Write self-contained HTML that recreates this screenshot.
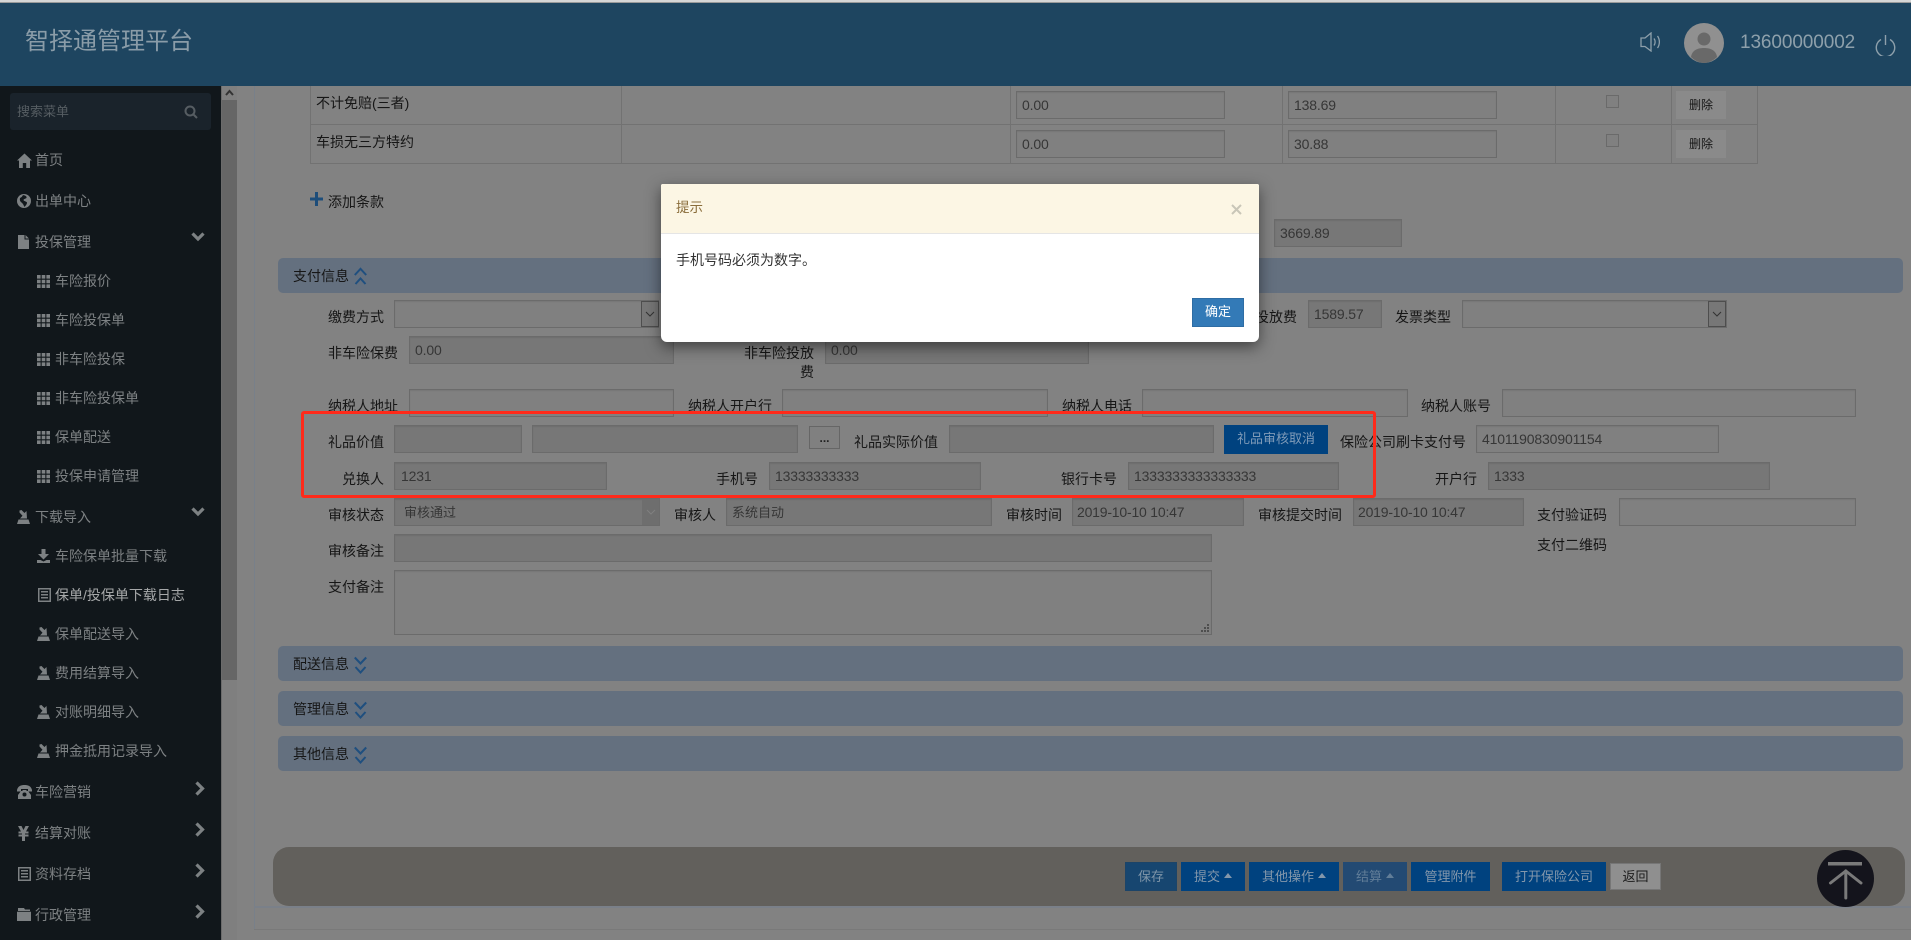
<!DOCTYPE html>
<html lang="zh-CN">
<head>
<meta charset="utf-8">
<title>智择通管理平台</title>
<style>
*{box-sizing:border-box}
html,body{margin:0;padding:0;width:1911px;height:940px;overflow:hidden;background:#828282;font-family:"Liberation Sans","Noto Sans CJK SC",sans-serif;font-size:14px;color:#1a1a1a}
div,span,svg{position:absolute}
.top{left:0;top:0;width:1911px;height:3px;background:#d6d6d6;border-bottom:1px solid #9a9a9a}
.hd{left:0;top:3px;width:1911px;height:83px;background:#1e4560}
.logo{left:25px;top:26px;font-size:24px;line-height:32px;color:#8a9ca8;white-space:nowrap}
.user{left:1740px;top:30px;font-size:19px;line-height:26px;letter-spacing:-.1px;color:#8ea0ab;white-space:nowrap}
.sb{left:0;top:86px;width:221px;height:854px;background:#11171b}
.sr{left:10px;top:93px;width:201px;height:37px;background:#1a232b;border-radius:3px}
.st{left:17px;top:102px;font-size:13px;line-height:20px;color:#565d62;white-space:nowrap}
.m{white-space:nowrap;line-height:20px;color:#7d8183;font-size:14px}
.m0{left:35px}
.m1{left:55px}
.scr{left:221px;top:86px;width:16px;height:854px;background:#7f7f7f;border-left:1px solid #6b6b6b}
.thumb{left:222px;top:100px;width:15px;height:580px;background:#666}
.v{background:#727272}
.h{background:#727272;height:1px}
.l{white-space:nowrap;line-height:20px;color:#161616;font-size:14px}
.i{height:28px;line-height:27px;border:1px solid #6b6b6b;background:#808080;padding-left:5px;color:#363636;font-size:14px;letter-spacing:-.15px;white-space:nowrap;box-shadow:inset 0 1px 1px rgba(0,0,0,.08)}
.r{background:#777}
.z{font-size:13px;letter-spacing:0;padding-left:9px}
.bar{left:278px;width:1625px;height:35px;background:#64707f;border-radius:5px}
.bt{left:293px;line-height:20px;white-space:nowrap;color:#161616;font-size:14px}
.b{height:29px;top:862px;background:#00427f;color:#8397ab;font-size:13px;line-height:29px;white-space:nowrap}
.b span{top:0;line-height:29px}
.ca{width:0;height:0;border-left:4px solid transparent;border-right:4px solid transparent;border-bottom:5px solid #8397ab;top:873px}
.arr{width:18px;height:26px;border:1px solid #4e4e4e;background:#777}
.del{left:1676px;width:50px;height:28px;background:#8a8a8a;color:#161616;font-size:12px;line-height:28px;text-align:center}
.cb{left:1606px;width:13px;height:13px;border:1px solid #6a6a6a;background:#808080}
.shade{left:661px;top:184px;width:598px;height:158px;background:#fff;border-radius:2px 2px 6px 6px;box-shadow:0 5px 15px rgba(0,0,0,.5)}
.red{left:301px;top:411px;width:1075px;height:87px;border:3px solid #ff2a1a;border-radius:3px}
</style>
</head>
<body>
<svg width="0" height="0" style="left:0;top:0">
<symbol id="home" viewBox="0 0 15 15"><path d="M7.5 0.5 L15 7.5 L13 7.5 L13 15 L9.2 15 L9.2 10 L5.8 10 L5.8 15 L2 15 L2 7.5 L0 7.5 Z" fill="#7d8183"/></symbol>
<symbol id="globe" viewBox="0 0 14 14"><circle cx="7" cy="7" r="7" fill="#7d8183"/><path d="M6 1 C8 1.5 10 2 9.5 4 C8.5 5 7 4.5 6.5 6 C7 7.5 9 7 10 8.5 C10 10.5 8.5 11.5 7.5 13 C6.5 11 6 9.5 4.5 8.5 C3 7.5 2.5 6 3 4 C4 3.5 5 3 6 1 Z" fill="#11171b"/></symbol>
<symbol id="file" viewBox="0 0 11 14"><path d="M0 0 H6.5 V4.5 H11 V14 H0 Z M7.5 0 L11 3.5 H7.5 Z" fill="#7d8183"/></symbol>
<symbol id="th" viewBox="0 0 13 13"><path d="M0 0h3.6v3.6H0zM4.7 0h3.6v3.6H4.7zM9.4 0H13v3.6H9.4zM0 4.7h3.6v3.6H0zM4.7 4.7h3.6v3.6H4.7zM9.4 4.7H13v3.6H9.4zM0 9.4h3.6V13H0zM4.7 9.4h3.6V13H4.7zM9.4 9.4H13V13H9.4z" fill="#7d8183"/></symbol>
<symbol id="imp" viewBox="0 0 13 14"><path d="M2.5 0.5 L4.5 0 L7.5 3 L9.5 1 L10 8.5 L3 8.5 L5.5 5.8 L2.5 2.5 Z M1.5 9.5 H11.5 L13 14 H0 Z" fill="#7d8183"/></symbol>
<symbol id="dl" viewBox="0 0 13 14"><path d="M4.5 0 H8.5 V5 H12 L6.5 10.5 L1 5 H4.5 Z M0 11 H3.5 L6.5 12.5 L9.5 11 H13 V14 H0 Z" fill="#7d8183"/></symbol>
<symbol id="list" viewBox="0 0 13 14"><path fill-rule="evenodd" d="M0 0 H13 V14 H0 Z M1.5 1.5 V12.5 H11.5 V1.5 Z M3 3 H10 V4.5 H3 Z M3 6 H10 V7.5 H3 Z M3 9 H10 V10.5 H3 Z" fill="#7d8183"/></symbol>
<symbol id="tel" viewBox="0 0 15 14"><path d="M0 5 C1 1 4 0 7.5 0 C11 0 14 1 15 5 V6.5 H11 V4 H4 V6.5 H0 Z M4 6 H5.5 V5 H9.5 V6 H11 L14 10 V14 H1 V10 Z" fill="#7d8183"/><circle cx="7.5" cy="9.5" r="2" fill="#11171b"/></symbol>
<symbol id="yen" viewBox="0 0 11 15"><path d="M0 0 H3.5 L5.5 4 L7.5 0 H11 L8 5.5 H10.5 V7.5 H7 V8.5 H10.5 V10.5 H7 V15 H4 V10.5 H.5 V8.5 H4 V7.5 H.5 V5.5 H3 Z" fill="#7d8183"/></symbol>
<symbol id="fold" viewBox="0 0 14 13"><path d="M1 0 H7 L8 1.5 H13 V3 H1 Z M0 3.8 H14 V13 H0 Z" fill="#7d8183"/></symbol>
</svg>

<div class="top"></div>
<div class="hd"></div>
<div class="logo">智择通管理平台</div>
<svg style="left:1640px;top:32px" width="23" height="20" viewBox="0 0 23 20" fill="none" stroke="#8ea0ab" stroke-width="1.3"><path d="M1 6 H5 L11 1 V19 L5 14.5 H1 Z"/><path d="M14 6.5 C15.5 8.5 15.5 11.5 14 13.5"/><path d="M17.5 4 C20 7.5 20 12.5 17.5 16"/></svg>
<svg style="left:1684px;top:23px" width="40" height="40" viewBox="0 0 40 40"><circle cx="20" cy="20" r="20" fill="#909090"/><circle cx="20" cy="16" r="6.5" fill="#696969"/><path d="M7 34 C8 27 14 25 20 25 C26 25 32 27 33 34 C29 38 24 40 20 40 C16 40 11 38 7 34 Z" fill="#696969"/></svg>
<div class="user">13600000002</div>
<svg style="left:1875px;top:34px" width="21" height="22" viewBox="0 0 21 22" fill="none" stroke="#8ea0ab" stroke-width="1.4"><path d="M6 5.5 A9.2 9.2 0 1 0 15 5.5"/><path d="M10.5 1 V11"/></svg>

<!-- sidebar -->
<div class="sb"></div>
<div class="sr"></div>
<div class="st">搜索菜单</div>
<svg style="left:184px;top:105px" width="14" height="14" viewBox="0 0 14 14" fill="none" stroke="#565d62" stroke-width="2"><circle cx="6" cy="6" r="4.5"/><path d="M9.5 9.5 L13 13"/></svg>

<svg style="left:17px;top:153px" width="15" height="15"><use href="#home"/></svg><div class="m m0" style="top:150px">首页</div>
<svg style="left:17px;top:194px" width="14" height="14"><use href="#globe"/></svg><div class="m m0" style="top:191px">出单中心</div>
<svg style="left:18px;top:235px" width="11" height="14"><use href="#file"/></svg><div class="m m0" style="top:232px">投保管理</div>
<svg style="left:191px;top:232px" width="14" height="10" viewBox="0 0 14 10" fill="none" stroke="#7d8183" stroke-width="3.2"><path d="M1.5 1.5 L7 7 L12.5 1.5"/></svg>

<svg style="left:37px;top:275px" width="13" height="13"><use href="#th"/></svg><div class="m m1" style="top:271px">车险报价</div>
<svg style="left:37px;top:314px" width="13" height="13"><use href="#th"/></svg><div class="m m1" style="top:310px">车险投保单</div>
<svg style="left:37px;top:353px" width="13" height="13"><use href="#th"/></svg><div class="m m1" style="top:349px">非车险投保</div>
<svg style="left:37px;top:392px" width="13" height="13"><use href="#th"/></svg><div class="m m1" style="top:388px">非车险投保单</div>
<svg style="left:37px;top:431px" width="13" height="13"><use href="#th"/></svg><div class="m m1" style="top:427px">保单配送</div>
<svg style="left:37px;top:470px" width="13" height="13"><use href="#th"/></svg><div class="m m1" style="top:466px">投保申请管理</div>

<svg style="left:17px;top:510px" width="13" height="14"><use href="#imp"/></svg><div class="m m0" style="top:507px">下载导入</div>
<svg style="left:191px;top:507px" width="14" height="10" viewBox="0 0 14 10" fill="none" stroke="#7d8183" stroke-width="3.2"><path d="M1.5 1.5 L7 7 L12.5 1.5"/></svg>

<svg style="left:37px;top:549px" width="13" height="14"><use href="#dl"/></svg><div class="m m1" style="top:546px">车险保单批量下载</div>
<svg style="left:38px;top:588px" width="13" height="14"><use href="#list"/></svg><div class="m m1" style="top:585px;color:#a6a8a9">保单/投保单下载日志</div>
<svg style="left:37px;top:627px" width="13" height="14"><use href="#imp"/></svg><div class="m m1" style="top:624px">保单配送导入</div>
<svg style="left:37px;top:666px" width="13" height="14"><use href="#imp"/></svg><div class="m m1" style="top:663px">费用结算导入</div>
<svg style="left:37px;top:705px" width="13" height="14"><use href="#imp"/></svg><div class="m m1" style="top:702px">对账明细导入</div>
<svg style="left:37px;top:744px" width="13" height="14"><use href="#imp"/></svg><div class="m m1" style="top:741px">押金抵用记录导入</div>

<svg style="left:17px;top:785px" width="15" height="14"><use href="#tel"/></svg><div class="m m0" style="top:782px">车险营销</div>
<svg style="left:195px;top:781px" width="10" height="15" viewBox="0 0 10 15" fill="none" stroke="#7d8183" stroke-width="3.2"><path d="M1.5 1.5 L7.5 7.5 L1.5 13.5"/></svg>
<svg style="left:18px;top:826px" width="11" height="15"><use href="#yen"/></svg><div class="m m0" style="top:823px">结算对账</div>
<svg style="left:195px;top:822px" width="10" height="15" viewBox="0 0 10 15" fill="none" stroke="#7d8183" stroke-width="3.2"><path d="M1.5 1.5 L7.5 7.5 L1.5 13.5"/></svg>
<svg style="left:18px;top:867px" width="13" height="14"><use href="#list"/></svg><div class="m m0" style="top:864px">资料存档</div>
<svg style="left:195px;top:863px" width="10" height="15" viewBox="0 0 10 15" fill="none" stroke="#7d8183" stroke-width="3.2"><path d="M1.5 1.5 L7.5 7.5 L1.5 13.5"/></svg>
<svg style="left:17px;top:908px" width="14" height="13"><use href="#fold"/></svg><div class="m m0" style="top:905px">行政管理</div>
<svg style="left:195px;top:904px" width="10" height="15" viewBox="0 0 10 15" fill="none" stroke="#7d8183" stroke-width="3.2"><path d="M1.5 1.5 L7.5 7.5 L1.5 13.5"/></svg>

<!-- scrollbar -->
<div class="scr"></div>
<div class="thumb"></div>
<svg style="left:225px;top:89px" width="9" height="7" viewBox="0 0 9 7" fill="none" stroke="#333" stroke-width="2"><path d="M1 6 L4.5 2 L8 6"/></svg>

<!-- panel lines -->
<div style="left:254px;top:86px;width:1px;height:843px;background:#78808a"></div>
<div style="left:254px;top:906px;width:1657px;height:2px;background:#7a8089"></div>
<div style="left:254px;top:929px;width:1657px;height:1px;background:#797979"></div>

<!-- table -->
<div class="v" style="left:310px;top:86px;width:1px;height:78px"></div>
<div class="v" style="left:621px;top:86px;width:1px;height:78px"></div>
<div class="v" style="left:1010px;top:86px;width:1px;height:78px"></div>
<div class="v" style="left:1282px;top:86px;width:1px;height:78px"></div>
<div class="v" style="left:1555px;top:86px;width:1px;height:78px"></div>
<div class="v" style="left:1671px;top:86px;width:1px;height:78px"></div>
<div class="v" style="left:1757px;top:86px;width:1px;height:78px"></div>
<div class="h" style="left:310px;top:124px;width:1448px"></div>
<div class="h" style="left:310px;top:163px;width:1448px"></div>
<div class="l" style="left:316px;top:93px">不计免赔(三者)</div>
<div class="l" style="left:316px;top:132px">车损无三方特约</div>
<div class="i" style="left:1016px;top:91px;width:209px">0.00</div>
<div class="i" style="left:1016px;top:130px;width:209px">0.00</div>
<div class="i" style="left:1288px;top:91px;width:209px">138.69</div>
<div class="i" style="left:1288px;top:130px;width:209px">30.88</div>
<div class="cb" style="top:95px"></div>
<div class="cb" style="top:134px"></div>
<div class="del" style="top:91px">删除</div>
<div class="del" style="top:130px">删除</div>

<svg style="left:310px;top:192px" width="13" height="14" viewBox="0 0 13 14"><path d="M5 0 H8 V5.5 H13 V8.5 H8 V14 H5 V8.5 H0 V5.5 H5 Z" fill="#1d4d7a"/></svg>
<div class="l" style="left:328px;top:192px">添加条款</div>
<div class="i r" style="left:1274px;top:219px;width:128px">3669.89</div>

<!-- bar: payment -->
<div class="bar" style="top:258px"></div>
<div class="bt" style="top:266px">支付信息</div>
<svg style="left:354px;top:267px" width="13" height="18" viewBox="0 0 13 18" fill="none" stroke="#1f4f7f" stroke-width="2"><path d="M.8 8 L6.5 1.8 L12.2 8"/><path d="M1.5 17 L6.5 11.5 L11.5 17"/></svg>

<!-- row 1 -->
<div class="l" style="left:328px;top:307px">缴费方式</div>
<div class="i" style="left:394px;top:300px;width:265px"></div>
<div class="arr" style="left:641px;top:301px"></div>
<svg style="left:645px;top:311px" width="10" height="6" viewBox="0 0 10 6" fill="none" stroke="#333" stroke-width="1"><path d="M1 1 L5 5 L9 1"/></svg>
<div class="l" style="left:1255px;top:307px">投放费</div>
<div class="i r" style="left:1308px;top:300px;width:74px">1589.57</div>
<div class="l" style="left:1395px;top:307px">发票类型</div>
<div class="i" style="left:1462px;top:300px;width:265px"></div>
<div class="arr" style="left:1708px;top:301px"></div>
<svg style="left:1712px;top:311px" width="10" height="6" viewBox="0 0 10 6" fill="none" stroke="#333" stroke-width="1"><path d="M1 1 L5 5 L9 1"/></svg>

<!-- row 2 -->
<div class="l" style="left:328px;top:343px">非车险保费</div>
<div class="i r" style="left:409px;top:336px;width:265px">0.00</div>
<div class="l" style="left:744px;top:343px">非车险投放</div>
<div class="l" style="left:800px;top:362px">费</div>
<div class="i r" style="left:825px;top:336px;width:264px">0.00</div>

<!-- row 3 -->
<div class="l" style="left:328px;top:396px">纳税人地址</div>
<div class="i" style="left:409px;top:389px;width:265px"></div>
<div class="l" style="left:688px;top:396px">纳税人开户行</div>
<div class="i" style="left:782px;top:389px;width:266px"></div>
<div class="l" style="left:1062px;top:396px">纳税人电话</div>
<div class="i" style="left:1142px;top:389px;width:266px"></div>
<div class="l" style="left:1421px;top:396px">纳税人账号</div>
<div class="i" style="left:1502px;top:389px;width:354px"></div>

<!-- row 4 -->
<div class="l" style="left:328px;top:432px">礼品价值</div>
<div class="i r" style="left:394px;top:425px;width:128px"></div>
<div class="i r" style="left:532px;top:425px;width:266px"></div>
<div style="left:809px;top:426px;width:31px;height:23px;border:1px solid #666;background:#808080;color:#222;font-size:12px;line-height:22px;text-align:center;font-weight:bold">...</div>
<div class="l" style="left:854px;top:432px">礼品实际价值</div>
<div class="i r" style="left:949px;top:425px;width:265px"></div>
<div style="left:1224px;top:425px;width:104px;height:29px;background:#00427f;color:#7f9bb8;font-size:13px;line-height:27px;text-align:center;white-space:nowrap">礼品审核取消</div>
<div class="l" style="left:1340px;top:432px">保险公司刷卡支付号</div>
<div class="i" style="left:1476px;top:425px;width:243px">4101190830901154</div>

<!-- row 5 -->
<div class="l" style="left:342px;top:469px">兑换人</div>
<div class="i r" style="left:394px;top:462px;width:213px;padding-left:6px">1231</div>
<div class="l" style="left:716px;top:469px">手机号</div>
<div class="i r" style="left:769px;top:462px;width:212px">13333333333</div>
<div class="l" style="left:1061px;top:469px">银行卡号</div>
<div class="i r" style="left:1128px;top:462px;width:211px">1333333333333333</div>
<div class="l" style="left:1435px;top:469px">开户行</div>
<div class="i r" style="left:1488px;top:462px;width:282px">1333</div>

<!-- row 6 -->
<div class="l" style="left:328px;top:505px">审核状态</div>
<div class="i r z" style="left:394px;top:498px;width:266px">审核通过</div>
<div style="left:642px;top:499px;width:17px;height:26px;background:#6e6e6e"></div>
<svg style="left:646px;top:509px" width="10" height="6" viewBox="0 0 10 6" fill="none" stroke="#808080" stroke-width="1"><path d="M1 1 L5 5 L9 1"/></svg>
<div class="l" style="left:674px;top:505px">审核人</div>
<div class="i r z" style="left:726px;top:498px;width:266px;padding-left:5px">系统自动</div>
<div class="l" style="left:1006px;top:505px">审核时间</div>
<div class="i r" style="left:1072px;top:498px;width:172px;letter-spacing:-.2px;padding-left:4px">2019-10-10 10:47</div>
<div class="l" style="left:1258px;top:505px">审核提交时间</div>
<div class="i r" style="left:1353px;top:498px;width:171px;letter-spacing:-.2px;padding-left:4px">2019-10-10 10:47</div>
<div class="l" style="left:1537px;top:505px">支付验证码</div>
<div class="i" style="left:1619px;top:498px;width:237px"></div>

<!-- row 7 -->
<div class="l" style="left:328px;top:541px">审核备注</div>
<div class="i r" style="left:394px;top:534px;width:818px"></div>
<div class="l" style="left:1537px;top:535px">支付二维码</div>

<!-- row 8 -->
<div class="l" style="left:328px;top:577px">支付备注</div>
<div class="i" style="left:394px;top:570px;width:818px;height:65px"></div>
<svg style="left:1200px;top:623px" width="10" height="10" viewBox="0 0 10 10" fill="#4e4e4e"><path d="M7 1h2v2H7zM4 4h2v2H4zM7 4h2v2H7zM1 7h2v2H1zM4 7h2v2H4zM7 7h2v2H7z"/></svg>

<!-- other bars -->
<div class="bar" style="top:646px"></div>
<div class="bt" style="top:654px">配送信息</div>
<svg style="left:354px;top:656px" width="13" height="18" viewBox="0 0 13 18" fill="none" stroke="#1f4f7f" stroke-width="2"><path d="M.8 1.5 L6.5 7.5 L12.2 1.5"/><path d="M1.5 11 L6.5 16.5 L11.5 11"/></svg>
<div class="bar" style="top:691px"></div>
<div class="bt" style="top:699px">管理信息</div>
<svg style="left:354px;top:701px" width="13" height="18" viewBox="0 0 13 18" fill="none" stroke="#1f4f7f" stroke-width="2"><path d="M.8 1.5 L6.5 7.5 L12.2 1.5"/><path d="M1.5 11 L6.5 16.5 L11.5 11"/></svg>
<div class="bar" style="top:736px"></div>
<div class="bt" style="top:744px">其他信息</div>
<svg style="left:354px;top:746px" width="13" height="18" viewBox="0 0 13 18" fill="none" stroke="#1f4f7f" stroke-width="2"><path d="M.8 1.5 L6.5 7.5 L12.2 1.5"/><path d="M1.5 11 L6.5 16.5 L11.5 11"/></svg>

<!-- bottom bar -->
<div style="left:273px;top:847px;width:1632px;height:59px;background:#62605c;border-radius:16px"></div>
<div class="b" style="left:1125px;width:52px;background:#174670;color:#7f95a8;text-align:center;border:1px solid #1c4468;line-height:27px">保存</div>
<div class="b" style="left:1181px;width:64px"><span style="left:13px">提交</span></div>
<div class="ca" style="left:1224px"></div>
<div class="b" style="left:1249px;width:90px"><span style="left:13px">其他操作</span></div>
<div class="ca" style="left:1318px"></div>
<div class="b" style="left:1343px;width:64px;background:#234a73;color:#617d98"><span style="left:13px">结算</span></div>
<div class="ca" style="left:1386px;border-bottom-color:#617d98"></div>
<div class="b" style="left:1411px;width:79px;text-align:center">管理附件</div>
<div class="b" style="left:1502px;width:104px;text-align:center">打开保险公司</div>
<div class="b" style="left:1610px;top:863px;width:51px;height:27px;background:#8f8f8f;color:#1a1a1a;border:1px solid #767676;text-align:center;line-height:25px">返回</div>
<svg style="left:1817px;top:850px" width="57" height="57" viewBox="0 0 57 57" fill="none"><circle cx="28.5" cy="28.5" r="28.5" fill="#14141c"/><path d="M11 13.8 H45" stroke="#7a7a7a" stroke-width="3.5"/><path d="M28.8 48 V21" stroke="#7a7a7a" stroke-width="3" stroke-linecap="round"/><path d="M13.5 33 L28.8 21 L44 33" stroke="#7a7a7a" stroke-width="3" stroke-linecap="round"/></svg>

<!-- modal -->
<div class="shade"></div>
<div style="left:661px;top:184px;width:598px;height:50px;background:#fcf6e4;border-bottom:1px solid #e5e5e5;border-radius:2px 2px 0 0"></div>
<div style="left:676px;top:198px;font-size:13.5px;line-height:20px;color:#8a6d3b;white-space:nowrap">提示</div>
<svg style="left:1231px;top:204px" width="11" height="11" viewBox="0 0 11 11" fill="none" stroke="#c9c6b8" stroke-width="2"><path d="M1 1 L10 10 M10 1 L1 10"/></svg>
<div style="left:676px;top:250px;font-size:14px;line-height:20px;color:#333;white-space:nowrap">手机号码必须为数字。</div>
<div style="left:1192px;top:298px;width:52px;height:29px;background:#337ab7;border:1px solid #2e6da4;color:#fff;font-size:13px;line-height:26px;text-align:center">确定</div>

<!-- red annotation -->
<div class="red"></div>
</body>
</html>
